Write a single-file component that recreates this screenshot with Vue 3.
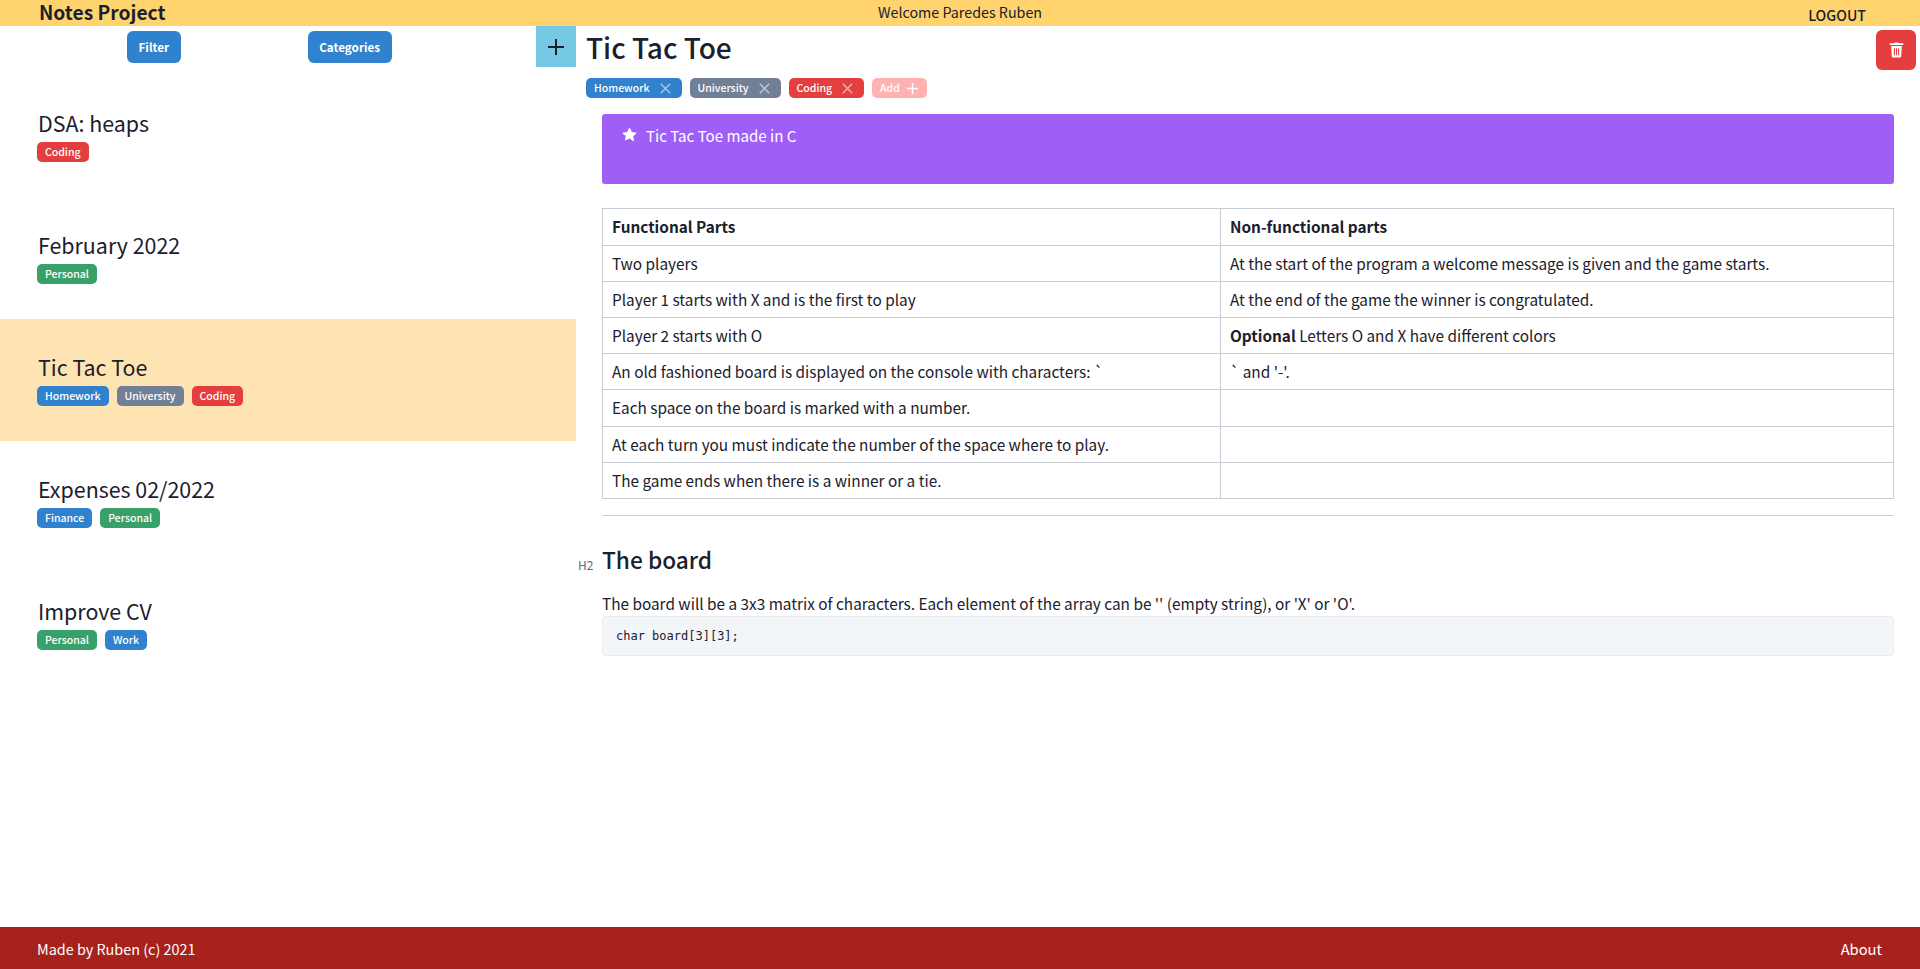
<script setup>
const notes = [
  { title: 'DSA: heaps', tags: [['Coding', 'red']] },
  { title: 'February 2022', tags: [['Personal', 'green']] },
  { title: 'Tic Tac Toe', active: true, tags: [['Homework', 'blue'], ['University', 'gray'], ['Coding', 'red']] },
  { title: 'Expenses 02/2022', tags: [['Finance', 'blue'], ['Personal', 'green']] },
  { title: 'Improve CV', tags: [['Personal', 'green'], ['Work', 'blue']] },
]
const editTags = [['Homework', 'blue'], ['University', 'gray'], ['Coding', 'red']]
const rows = [
  ['Two players', 'At the start of the program a welcome message is given and the game starts.'],
  ['Player 1 starts with X and is the first to play', 'At the end of the game the winner is congratulated.'],
  ['Player 2 starts with O', null],
  ['An old fashioned board is displayed on the console with characters: `', "` and '-'."],
  ['Each space on the board is marked with a number.', '', true],
  ['At each turn you must indicate the number of the space where to play.', ''],
  ['The game ends when there is a winner or a tie.', ''],
]
</script>

<template>
  <div class="page">
    <header class="topbar">
      <div class="brand">Notes Project</div>
      <div class="welcome">Welcome Paredes Ruben</div>
      <div class="logout">LOGOUT</div>
    </header>
    <div class="main">
      <aside class="sidebar">
        <div class="actions">
          <button class="btn">Filter</button>
          <button class="btn second">Categories</button>
          <button class="add" aria-label="Add note">
            <svg width="16" height="16" viewBox="0 0 16 16"><path d="M8 0v16M0 8h16" stroke="#1a202c" stroke-width="2" fill="none"/></svg>
          </button>
        </div>
        <div v-for="n in notes" :key="n.title" class="note" :class="{ active: n.active }">
          <div class="note-title">{{ n.title }}</div>
          <div class="tags">
            <span v-for="t in n.tags" :key="t[0]" class="tag" :class="t[1]">{{ t[0] }}</span>
          </div>
        </div>
      </aside>
      <main class="content">
        <div class="title-row">
          <h1>Tic Tac Toe</h1>
          <button class="trash" aria-label="Delete">
            <svg width="15" height="16" viewBox="0 0 16 18" fill="#fff"><path d="M5.500 1.500 6.200.5h3.600l.7 1H15a.8.8 0 0 1 0 1.800H1a.8.8 0 0 1 0-1.800zM2 4.500h12l-.7 11.800c0 .7-.6 1.200-1.200 1.200H3.900c-.6 0-1.200-.5-1.200-1.200zM5 7v8h1.200V7zm2.400 0v8h1.200V7zm2.400 0v8H11V7z" fill-rule="evenodd"/></svg>
          </button>
        </div>
        <div class="tags edit-tags">
          <span v-for="t in editTags" :key="t[0]" class="tag" :class="t[1]">
            {{ t[0] }}
            <svg class="x" width="11" height="11" viewBox="0 0 11 11"><path d="M.8.8l9.400 9.400M10.200.8.800 10.200" stroke="#fff" stroke-opacity=".55" stroke-width="1.500" fill="none"/></svg>
          </span>
          <span class="tag pink">Add
            <svg class="x plus" width="11" height="11" viewBox="0 0 11 11"><path d="M5.500 0v11M0 5.500h11" stroke="#fff" stroke-width="1.500" fill="none"/></svg>
          </span>
        </div>
        <div class="doc">
          <div class="callout">
            <svg width="15" height="15" viewBox="0 0 24 24" fill="#fff" stroke="#fff" stroke-width="2" stroke-linejoin="round"><path d="M12 2.500l3 6.400 7 .9-5.100 4.800 1.300 6.900L12 17.100l-6.200 3.400 1.300-6.900L2 9.800l7-.9z"/></svg>
            <span>Tic Tac Toe made in C</span>
          </div>
          <table>
            <tbody>
              <tr class="tall"><th class="c1">Functional Parts</th><th>Non-functional parts</th></tr>
              <tr v-for="r in rows" :key="r[0]" :class="{ tall: r[2] }">
                <td>{{ r[0] }}</td>
                <td v-if="r[1] !== null">{{ r[1] }}</td>
                <td v-else><b>Optional</b> Letters O and X have different colors</td>
              </tr>
            </tbody>
          </table>
          <hr />
          <div class="h2-wrap">
            <span class="h2-mark">H2</span>
            <h2>The board</h2>
          </div>
          <p>The board will be a 3x3 matrix of characters. Each element of the array can be '' (empty string), or 'X' or 'O'.</p>
          <pre>char board[3][3];</pre>
        </div>
      </main>
    </div>
    <footer class="footer">
      <span>Made by Ruben (c) 2021</span>
      <span class="about">About</span>
    </footer>
  </div>
</template>

<style>
html, body { margin: 0; padding: 0; }
</style>

<style scoped>
.page {
  height: 969px;
  display: flex;
  flex-direction: column;
  font-family: "Noto Sans CJK SC", "Noto Sans", sans-serif;
  color: #1a202c;
  background: #fff;
  overflow: hidden;
}
.topbar {
  height: 26px;
  flex: none;
  background: #ffd46f;
  display: grid;
  grid-template-columns: 1fr auto 1fr;
  align-items: start;
  font-size: 14.3px;
}
.brand { font-size: 19.2px; font-weight: 700; padding-left: 39px; line-height: 24px; }
.welcome { line-height: 24px; }
.logout { justify-self: end; font-size: 14.2px; font-weight: 500; padding-right: 54px; line-height: 30px; }
.main { flex: 1; display: flex; min-height: 0; }
.sidebar { width: 576px; flex: none; }
.actions { height: 49px; display: flex; align-items: flex-start; padding-left: 127px; box-sizing: border-box; }
.btn {
  margin-top: 5px;
  height: 32px;
  border: 0;
  border-radius: 6px;
  background: #3182ce;
  color: #fff;
  font: 700 11.7px "Noto Sans CJK SC", sans-serif;
  padding: 0 11.5px 2px;
}
.second { margin-left: 127px; }
.add {
  margin-left: auto;
  width: 40px;
  height: 41px;
  border: 0;
  padding: 0;
  background: #76c9e4;
  display: flex;
  align-items: center;
  justify-content: center;
}
.note { height: 122px; box-sizing: border-box; padding: 32px 37px 0; }
.note.active { background: #fee4b3; }
.note-title { font-size: 21.4px; line-height: 32px; padding-left: 1px; }
.tags { display: flex; gap: 8px; margin-top: 3px; }
.tag {
  height: 20px;
  box-sizing: border-box;
  padding: 0 8px;
  border-radius: 5px;
  color: #fff;
  font-size: 10.5px;
  font-weight: 500;
  line-height: 20px;
  display: inline-flex;
  align-items: center;
}
.blue { background: #3182ce; }
.gray { background: #718096; }
.red { background: #e53e3e; }
.green { background: #38a169; }
.pink { background: #feb2b2; }
.x { margin-left: 10px; margin-right: 3px; }
.x.plus { margin-left: 7px; margin-right: 1px; }
.content { flex: 1; min-width: 0; padding: 0 4px 0 10px; box-sizing: border-box; }
.title-row { display: flex; justify-content: space-between; height: 52px; align-items: flex-start; }
h1 { margin: 0; font-size: 28px; font-weight: 500; line-height: 42px; }
.trash {
  width: 40px;
  height: 40px;
  margin-top: 4px;
  border: 0;
  border-radius: 6px;
  background: #e53e3e;
  display: flex;
  align-items: center;
  justify-content: center;
}
.edit-tags { margin-top: 0; }
.doc { padding: 0 22px 0 16px; margin-top: 16px; font-size: 15.35px; }
.callout {
  height: 70px;
  background: #9f5ff7;
  border-radius: 3px;
  color: #fff;
  box-sizing: border-box;
  padding: 10px 20px;
  display: flex;
  align-items: flex-start;
  gap: 9px;
  font-size: 15.1px;
  line-height: 22px;
}
.callout svg { margin-top: 3px; }
table { border-collapse: collapse; width: 100%; margin-top: 24px; table-layout: fixed; line-height: 24px; }
th, td { border: 1px solid #c8cdd5; padding: 4px 8px 6px 9px; text-align: left; height: 36px; box-sizing: border-box; font-weight: 400; }
.tall th, .tall td { height: 37px; }
th { font-weight: 700; }
th.c1 { width: 618px; }
b { font-weight: 700; }
hr { border: 0; border-top: 1px solid #c8cdd5; margin: 16px 0 0; }
.h2-wrap { display: flex; align-items: center; margin: 22px 0 0 -24px; }
h2 { margin: 0; font-size: 22.7px; font-weight: 500; line-height: 44px; }
.h2-mark { width: 24px; flex: none; padding-top: 8px; font-size: 12px; color: #5f6b7a; }
p { margin: 9px 0 0; line-height: 24px; }
pre {
  margin: 1px 0 0;
  height: 40px;
  box-sizing: border-box;
  background: #f3f6f9;
  border: 1px solid #e8ecf0;
  border-radius: 4px;
  padding: 0 13px;
  font: 12px/38px "DejaVu Sans Mono", monospace;
}
.footer {
  height: 42px;
  flex: none;
  background: #a7221c;
  color: #fff;
  display: flex;
  justify-content: space-between;
  align-items: center;
  padding: 0 38px 0 37px;
  font-size: 14.4px;
}
.about { font-size: 14.7px; }
</style>
